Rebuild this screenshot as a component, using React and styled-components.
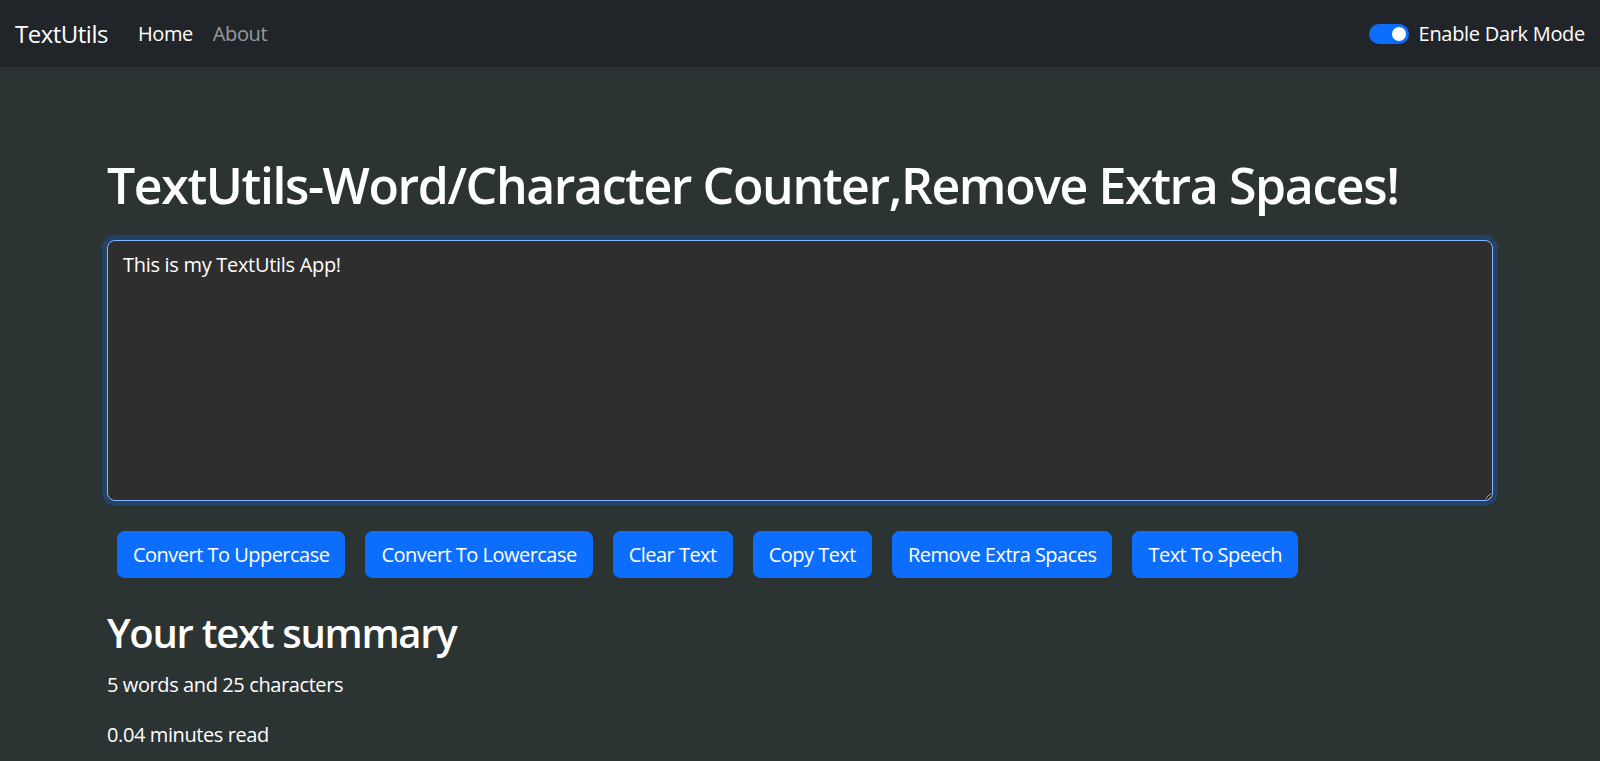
import React, { useState } from "react";
import styled, { createGlobalStyle } from "styled-components";

const GlobalStyle = createGlobalStyle`
  * { box-sizing: border-box; }
  body {
    margin: 0;
    background: #2c3333;
    color: #fff;
    font-family: "Open Sans", "Noto Sans", sans-serif;
  }
`;

const Page = styled.div`
  min-height: 100vh;
  display: flex;
  flex-direction: column;
`;

const NavBar = styled.nav`
  height: 67px;
  background: #212529;
  display: flex;
  align-items: center;
  justify-content: space-between;
  padding: 0 15px;
`;

const NavLeft = styled.div`
  display: flex;
  align-items: center;
`;

const Brand = styled.a`
  font-size: 24px;
  color: #fff;
  text-decoration: none;
  margin-right: 20px;
  letter-spacing: -0.5px;
`;

const NavLink = styled.a`
  font-size: 20px;
  padding: 0 10px;
  text-decoration: none;
  color: ${(p) => (p.active ? "#fff" : "rgba(255,255,255,0.55)")};
  letter-spacing: -0.4px;
`;

const SwitchWrap = styled.label`
  display: flex;
  align-items: center;
  gap: 10px;
  font-size: 20px;
  letter-spacing: -0.3px;
  cursor: pointer;
`;

const Track = styled.span`
  width: 40px;
  height: 20px;
  border-radius: 10px;
  background: ${(p) => (p.on ? "#0d6efd" : "#555")};
  display: flex;
  align-items: center;
  justify-content: ${(p) => (p.on ? "flex-end" : "flex-start")};
  padding: 0 3px;
`;

const Knob = styled.span`
  width: 14px;
  height: 14px;
  border-radius: 50%;
  background: #fff;
`;

const Main = styled.main`
  flex: 1;
  width: 1386px;
  margin: 0 auto;
  padding-top: 88px;
`;

const Title = styled.h1`
  margin: 0 0 25px;
  font-size: 50px;
  line-height: 60px;
  font-weight: 600;
  letter-spacing: -1.4px;
`;

const TextBox = styled.textarea`
  display: block;
  width: 100%;
  height: 261px;
  resize: vertical;
  background: #2e2e2e;
  color: #fff;
  font-family: inherit;
  font-size: 20px;
  line-height: 30px;
  letter-spacing: -0.3px;
  padding: 9px 15px 7px;
  border: 1px solid #86b7fe;
  border-radius: 8px;
  box-shadow: 0 0 0 5px rgba(13, 110, 253, 0.25);
  outline: none;
`;

const ButtonRow = styled.div`
  display: flex;
  flex-wrap: wrap;
  margin-top: 25px;
`;

const Button = styled.button`
  margin: 5px 10px;
  height: 47px;
  padding: 0 15px;
  background: #0d6efd;
  color: #fff;
  border: 1px solid #0d6efd;
  border-radius: 7.5px;
  font-family: inherit;
  font-size: 20px;
  letter-spacing: -0.52px;
  cursor: pointer;
`;

const Summary = styled.section`
  margin-top: 26px;
`;

const SubTitle = styled.h2`
  margin: 0 0 13px;
  font-size: 40px;
  line-height: 48px;
  font-weight: 600;
  letter-spacing: -1.3px;
`;

const Stat = styled.p`
  margin: 0 0 20px;
  font-size: 20px;
  line-height: 30px;
  letter-spacing: -0.4px;
`;

const BottomEdge = styled.div`
  height: 4px;
  border-top: 1px solid #4a4d4d;
  background: #1e2020;
`;

const actions = [
  "Convert To Uppercase",
  "Convert To Lowercase",
  "Clear Text",
  "Copy Text",
  "Remove Extra Spaces",
  "Text To Speech",
];

export default function App() {
  const [text, setText] = useState("This is my TextUtils App!");
  const [dark, setDark] = useState(true);
  const words = text.split(/\s+/).filter((w) => w.length).length;

  return (
    <Page>
      <GlobalStyle />
      <NavBar>
        <NavLeft>
          <Brand href="#">TextUtils</Brand>
          <NavLink href="#" active>
            Home
          </NavLink>
          <NavLink href="#">About</NavLink>
        </NavLeft>
        <SwitchWrap onClick={() => setDark(!dark)}>
          <Track on={dark}>
            <Knob />
          </Track>
          Enable Dark Mode
        </SwitchWrap>
      </NavBar>

      <Main>
        <Title>TextUtils-Word/Character Counter,Remove Extra Spaces!</Title>
        <TextBox value={text} onChange={(e) => setText(e.target.value)} />
        <ButtonRow>
          {actions.map((a) => (
            <Button key={a}>{a}</Button>
          ))}
        </ButtonRow>
        <Summary>
          <SubTitle>Your text summary</SubTitle>
          <Stat>
            {words} words and {text.length} characters
          </Stat>
          <Stat>{(0.008 * words).toFixed(2)} minutes read</Stat>
        </Summary>
      </Main>
      <BottomEdge />
    </Page>
  );
}
